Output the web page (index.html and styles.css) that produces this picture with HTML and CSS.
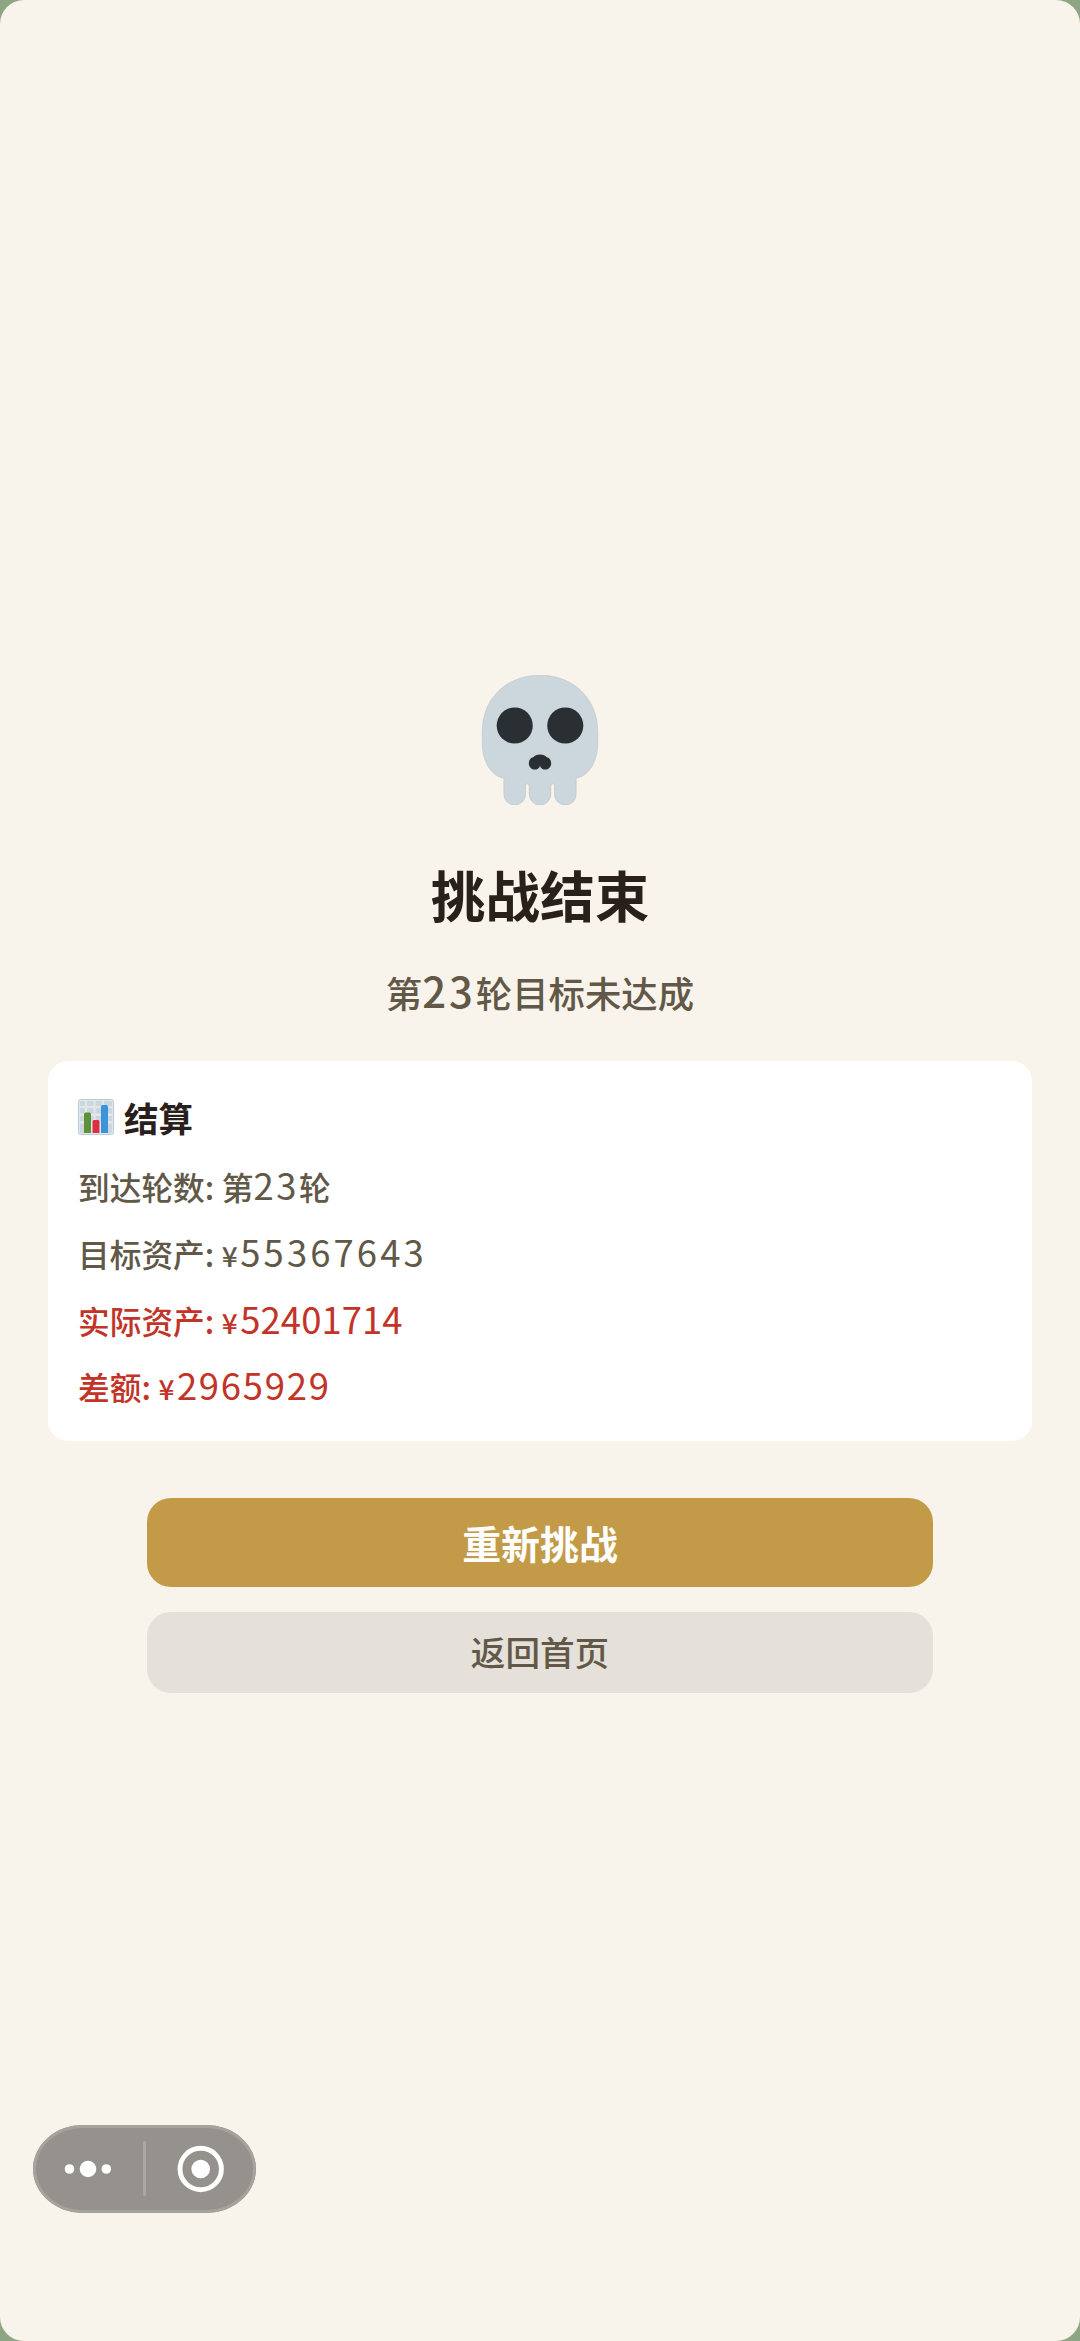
FILE: index.html
```html
<!DOCTYPE html>
<html lang="zh-CN">
<head>
<meta charset="utf-8">
<title>挑战结束</title>
<link rel="stylesheet" href="styles.css">
</head>
<body>
<main class="page">
  <svg class="skull" viewBox="0 0 36 36" aria-hidden="true">
    <path fill="#ccd6dd" stroke="#b9bfc1" stroke-width=".15" d="M34 16C34 6 26.84 .05 18 .05S2 6 2 16v2.500c0 5.500 2.300 9.300 6 10.100V33a3 3 0 0 0 6 0v-2.300c0-.8 1-.8 1 0V33a3 3 0 0 0 6 0v-2.300c0-.8 1-.8 1 0V33a3 3 0 0 0 6 0v-4.400c3.700-.8 6-4.600 6-10.100z"/>
    <circle cx="11" cy="14" r="5" fill="#292f33"/>
    <circle cx="25" cy="14" r="5" fill="#292f33"/>
    <path fill="#292f33" d="M18 22c-.9 0-1.500.3-1.900.8-.8.2-1.200.9-1.200 1.700 0 .9.7 1.700 1.700 1.700.6 0 1.100-.3 1.400-1 .3.700.8 1 1.400 1 1 0 1.700-.8 1.700-1.700 0-.8-.4-1.500-1.200-1.700-.4-.5-1-.8-1.900-.8z"/>
  </svg>
  <h1 class="title">挑战结束</h1>
  <p class="subtitle">第<span class="num">23</span>轮目标未达成</p>

  <section class="card">
    <h2 class="card-title">
      <svg class="chart" viewBox="0 0 36 36" aria-hidden="true">
        <rect x=".5" y=".5" width="35" height="35" rx="2" fill="#e1e8ed" stroke="#bccad6"/>
        <path fill="#ccd6dd" d="M2 2h5v5H2zM9 2h6.500v5H9zM17.500 2H24v5h-6.500zM26 2h8v5h-8zM2 9h5v5.500H2zM9 9h6.500v5.500H9zM17.500 9H24v5.500h-6.500zM26 9h8v5.500h-8zM2 17h5v5H2zM9 17h6.500v5H9zM17.500 17H24v5h-6.500zM26 17h8v5h-8zM2 24.500h5V34H2zM30 24.500h4V34h-4z"/>
        <path fill="#5c913b" d="M6 34V15a1.500 1.500 0 0 1 1.500-1.500h4A1.500 1.500 0 0 1 13 15v19z"/>
        <path fill="#dd2e44" d="M14.500 34V22.500A1.500 1.500 0 0 1 16 21h4a1.500 1.500 0 0 1 1.500 1.500V34z"/>
        <path fill="#3b94d9" d="M23 34V7.500A1.500 1.500 0 0 1 24.500 6h4A1.500 1.500 0 0 1 30 7.500V34z"/>
      </svg>
      <span>结算</span>
    </h2>
    <p class="row">到达轮数<span class="colon">:</span>第<span class="num">23</span>轮</p>
    <p class="row target">目标资产<span class="colon">:</span><span class="yen">¥</span><span class="num">55367643</span></p>
    <p class="row loss actual">实际资产<span class="colon">:</span><span class="yen">¥</span><span class="num">52401714</span></p>
    <p class="row loss gap">差额<span class="colon">:</span><span class="yen">¥</span><span class="num">2965929</span></p>
  </section>

  <div class="actions">
    <button class="btn primary">重新挑战</button>
    <button class="btn secondary">返回首页</button>
  </div>

  <div class="capsule">
    <svg viewBox="0 0 223 88" aria-hidden="true">
      <g fill="#fff">
        <circle cx="36.500" cy="44" r="4.800"/>
        <circle cx="55" cy="44" r="8.300"/>
        <circle cx="73.300" cy="44" r="4.800"/>
        <circle cx="167.700" cy="44" r="9.300"/>
      </g>
      <rect x="110" y="16" width="3" height="55" rx="1.500" fill="#aaa8a3"/>
      <circle cx="167.700" cy="44" r="20.700" fill="none" stroke="#fff" stroke-width="4.900"/>
    </svg>
  </div>
</main>
</body>
</html>
```
FILE: styles.css
```css
* { box-sizing: border-box; margin: 0; padding: 0; }

body {
  background: #8ca684;
  font-family: "Noto Sans CJK SC", sans-serif;
  color: #615847;
}

.page {
  position: relative;
  display: flex;
  flex-direction: column;
  align-items: center;
  height: 2341px;
  padding: 675px 48px 0;
  border-radius: 24px;
  background: #f8f3eb;
}

.skull { width: 130px; height: 130px; }

.title {
  margin-top: 49px;
  line-height: 80px;
  font-size: 54.7px;
  font-weight: 700;
  color: #2a201b;
}

.subtitle {
  margin-top: 32px;
  line-height: 52px;
  font-size: 36.400px;
  font-weight: 500;
}

.num {
  font-size: 1.15em;
  letter-spacing: .07em;
  line-height: 1;
}

.card {
  width: 100%;
  height: 380px;
  margin-top: 43px;
  padding: 31px 30px;
  border-radius: 20px;
  background: #fff;
}

.card-title {
  display: flex;
  align-items: center;
  gap: 10px;
  height: 50px;
  margin-bottom: 11px;
  line-height: 48px;
  font-size: 34.500px;
  font-weight: 700;
  color: #2a201b;
}

.chart { width: 36px; height: 36px; }

.row {
  height: 66.800px;
  line-height: 66.800px;
  font-size: 31.700px;
  font-weight: 500;
  white-space: nowrap;
}

.row .num { font-weight: 400; }

.loss { color: #c23328; }
.target .num { letter-spacing: .085em; }
.actual .num { letter-spacing: .002em; }
.gap .num { letter-spacing: .048em; }

.colon { display: inline-block; width: 17px; }

.yen {
  display: inline-block;
  width: 18.500px;
  font-size: 28px;
}

.actions {
  display: flex;
  flex-direction: column;
  gap: 25px;
  width: 786px;
  margin-top: 57px;
}

.btn {
  border: 0;
  border-radius: 24px;
  font-family: inherit;
}

.primary {
  height: 89px;
  padding-bottom: 1px;
  background: #c39b48;
  color: #fff;
  font-size: 38.900px;
  font-weight: 700;
}

.secondary {
  height: 81px;
  padding-bottom: 3px;
  background: #e5e0d9;
  color: #615847;
  font-size: 34.600px;
  font-weight: 500;
}

.capsule {
  position: absolute;
  left: 33px;
  top: 2125px;
  width: 223px;
  height: 88px;
  border-radius: 50px / 44px;
  background: #95928d;
  box-shadow: inset 0 0 0 3px #a5a39e;
}

.capsule svg { display: block; width: 100%; height: 100%; }
```
